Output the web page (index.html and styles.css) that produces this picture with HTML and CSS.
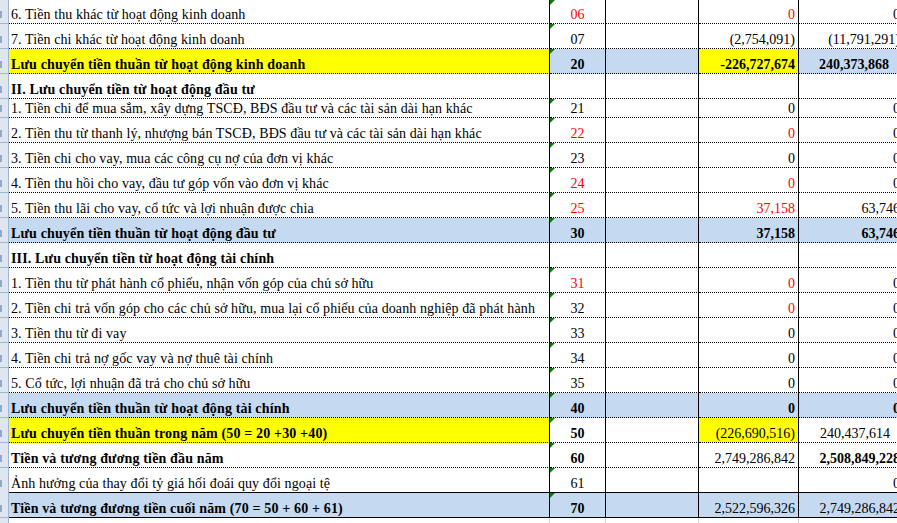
FILE: index.html
```html
<!DOCTYPE html>
<html lang="vi">
<head>
<meta charset="utf-8">
<title>Lưu chuyển tiền tệ</title>
<link rel="stylesheet" href="styles.css">
</head>
<body>
<div class="sheet">
  <div class="row first">
    <div class="hd"><span class="rn"></span></div>
    <div class="c lbl">6. Tiền thu khác từ hoạt động kinh doanh</div>
    <div class="c code tri red">06</div>
    <div class="c emp"></div>
    <div class="c num red">0</div>
    <div class="c num n5">0</div>
  </div>
  <div class="row">
    <div class="hd"><span class="rn"></span></div>
    <div class="c lbl">7. Tiền chi khác từ hoạt động kinh doanh</div>
    <div class="c code tri">07</div>
    <div class="c emp"></div>
    <div class="c num">(2,754,091)</div>
    <div class="c num n5 paren">(11,791,291)</div>
  </div>
  <div class="row b">
    <div class="hd"><span class="rn"></span></div>
    <div class="c lbl yel">Lưu chuyển tiền thuần từ hoạt động kinh doanh</div>
    <div class="c code tri blue">20</div>
    <div class="c emp blue"></div>
    <div class="c num yel">-226,727,674</div>
    <div class="c num n5 blue sp">240,373,868</div>
  </div>
  <div class="row b">
    <div class="hd"><span class="rn"></span></div>
    <div class="c lbl">II. Lưu chuyển tiền từ hoạt động đầu tư</div>
    <div class="c code"></div>
    <div class="c emp"></div>
    <div class="c num"></div>
    <div class="c num n5"></div>
  </div>
  <div class="row short">
    <div class="hd"><span class="rn"></span></div>
    <div class="c lbl">1. Tiền chi để mua sắm, xây dựng TSCĐ, BĐS đầu tư và các tài sản dài hạn khác</div>
    <div class="c code tri">21</div>
    <div class="c emp"></div>
    <div class="c num">0</div>
    <div class="c num n5">0</div>
  </div>
  <div class="row">
    <div class="hd"><span class="rn"></span></div>
    <div class="c lbl">2. Tiền thu từ thanh lý, nhượng bán TSCĐ, BĐS đầu tư và các tài sản dài hạn khác</div>
    <div class="c code tri red">22</div>
    <div class="c emp"></div>
    <div class="c num red">0</div>
    <div class="c num n5">0</div>
  </div>
  <div class="row">
    <div class="hd"><span class="rn"></span></div>
    <div class="c lbl">3. Tiền chi cho vay, mua các công cụ nợ của đơn vị khác</div>
    <div class="c code tri">23</div>
    <div class="c emp"></div>
    <div class="c num">0</div>
    <div class="c num n5">0</div>
  </div>
  <div class="row">
    <div class="hd"><span class="rn"></span></div>
    <div class="c lbl">4. Tiền thu hồi cho vay, đầu tư góp vốn vào đơn vị khác</div>
    <div class="c code tri red">24</div>
    <div class="c emp"></div>
    <div class="c num red">0</div>
    <div class="c num n5">0</div>
  </div>
  <div class="row">
    <div class="hd"><span class="rn"></span></div>
    <div class="c lbl">5. Tiền thu lãi cho vay, cổ tức và lợi nhuận được chia</div>
    <div class="c code tri red">25</div>
    <div class="c emp"></div>
    <div class="c num red">37,158</div>
    <div class="c num n5">63,746</div>
  </div>
  <div class="row b bluerow">
    <div class="hd"><span class="rn"></span></div>
    <div class="c lbl">Lưu chuyển tiền thuần từ hoạt động đầu tư</div>
    <div class="c code tri">30</div>
    <div class="c emp"></div>
    <div class="c num">37,158</div>
    <div class="c num n5">63,746</div>
  </div>
  <div class="row b">
    <div class="hd"><span class="rn"></span></div>
    <div class="c lbl">III. Lưu chuyển tiền từ hoạt động tài chính</div>
    <div class="c code"></div>
    <div class="c emp"></div>
    <div class="c num"></div>
    <div class="c num n5"></div>
  </div>
  <div class="row">
    <div class="hd"><span class="rn"></span></div>
    <div class="c lbl">1. Tiền thu từ phát hành cổ phiếu, nhận vốn góp của chủ sở hữu</div>
    <div class="c code tri red">31</div>
    <div class="c emp"></div>
    <div class="c num red">0</div>
    <div class="c num n5">0</div>
  </div>
  <div class="row">
    <div class="hd"><span class="rn"></span></div>
    <div class="c lbl">2. Tiền chi trả vốn góp cho các chủ sở hữu, mua lại cổ phiếu của doanh nghiệp đã phát hành</div>
    <div class="c code tri">32</div>
    <div class="c emp"></div>
    <div class="c num red">0</div>
    <div class="c num n5">0</div>
  </div>
  <div class="row">
    <div class="hd"><span class="rn"></span></div>
    <div class="c lbl">3. Tiền thu từ đi vay</div>
    <div class="c code tri">33</div>
    <div class="c emp"></div>
    <div class="c num">0</div>
    <div class="c num n5">0</div>
  </div>
  <div class="row">
    <div class="hd"><span class="rn"></span></div>
    <div class="c lbl">4. Tiền chi trả nợ gốc vay và nợ thuê tài chính</div>
    <div class="c code tri">34</div>
    <div class="c emp"></div>
    <div class="c num">0</div>
    <div class="c num n5">0</div>
  </div>
  <div class="row">
    <div class="hd"><span class="rn"></span></div>
    <div class="c lbl">5. Cổ tức, lợi nhuận đã trả cho chủ sở hữu</div>
    <div class="c code tri">35</div>
    <div class="c emp"></div>
    <div class="c num">0</div>
    <div class="c num n5">0</div>
  </div>
  <div class="row b bluerow">
    <div class="hd"><span class="rn"></span></div>
    <div class="c lbl">Lưu chuyển tiền thuần từ hoạt động tài chính</div>
    <div class="c code tri">40</div>
    <div class="c emp"></div>
    <div class="c num">0</div>
    <div class="c num n5">0</div>
  </div>
  <div class="row">
    <div class="hd"><span class="rn"></span></div>
    <div class="c lbl yel bold">Lưu chuyển tiền thuần trong năm (50 = 20 +30 +40)</div>
    <div class="c code tri bold">50</div>
    <div class="c emp"></div>
    <div class="c num yel">(226,690,516)</div>
    <div class="c num n5 sp2">240,437,614</div>
  </div>
  <div class="row">
    <div class="hd"><span class="rn"></span></div>
    <div class="c lbl bold">Tiền và tương đương tiền đầu năm</div>
    <div class="c code tri bold">60</div>
    <div class="c emp"></div>
    <div class="c num">2,749,286,842</div>
    <div class="c num n5 bold">2,508,849,228</div>
  </div>
  <div class="row">
    <div class="hd"><span class="rn"></span></div>
    <div class="c lbl">Ảnh hưởng của thay đổi tỷ giá hối đoái quy đổi ngoại tệ</div>
    <div class="c code tri">61</div>
    <div class="c emp"></div>
    <div class="c num"></div>
    <div class="c num n5">0</div>
  </div>
  <div class="row bluerow total">
    <div class="hd"><span class="rn"></span></div>
    <div class="c lbl bold">Tiền và tương đương tiền cuối năm (70 = 50 + 60 + 61)</div>
    <div class="c code tri bold">70</div>
    <div class="c emp"></div>
    <div class="c num">2,522,596,326</div>
    <div class="c num n5">2,749,286,842</div>
  </div>
  <div class="row tail">
    <div class="hd"></div>
    <div class="c lbl"></div>
    <div class="c code"></div>
    <div class="c emp"></div>
    <div class="c num"></div>
    <div class="c num n5"></div>
  </div>
</div>
</body>
</html>
```

FILE: styles.css
```css
html, body {
  margin: 0;
  padding: 0;
  background: #ffffff;
  overflow: hidden;
}
body {
  width: 897px;
  height: 523px;
  font-family: "Liberation Serif", "Times New Roman", serif;
  font-size: 14px;
  color: #000;
}
.sheet {
  display: flex;
  flex-direction: column;
  width: 902px;
}
.row {
  display: grid;
  grid-template-columns: 9px 541px 56px 93px 100px 103px;
  height: 25px;
}
.row.first { height: 24px; }
.row.short { height: 19px; }
.row.tail { height: 10px; }

.hd {
  position: relative;
  background: #dfe6ef;
  border-right: 1px solid #9eb6ce;
  border-bottom: 1px solid #9eb6ce;
  overflow: hidden;
}
.rn {
  position: absolute;
  left: 0;
  bottom: 5px;
  width: 2px;
  height: 7px;
  background: #6f8fbf;
  opacity: 0.7;
}
.c {
  position: relative;
  display: flex;
  align-items: flex-end;
  padding: 0 3px 0 2px;
  line-height: 16px;
  white-space: nowrap;
  overflow: hidden;
  border-bottom: 1px dotted #000;
  border-right: 1px solid #000;
}
.lbl { letter-spacing: 0.1px; }
.b .lbl, .lbl.bold { letter-spacing: 0.15px; }
.n5 { border-right: none; }
.code { justify-content: center; padding-left: 0; padding-right: 0; }
.num { justify-content: flex-end; padding-right: 3px; }
.num.n5 { padding-right: 2px; }
.num.n5.sp { padding-right: 13px; }
.num.n5.sp2 { padding-right: 12px; }
.num.n5.paren { padding-right: 2px; }

.b .c, .bold { font-weight: bold; }
.red { color: #ff0000; }
.yel { background: #ffff00; }
.blue, .bluerow .c { background: #c5d9f1; }
.bluerow .c.yel { background: #ffff00; }

.total .c {
  border-top: 1px solid #000;
  border-bottom: 1px solid #000;
}
.total { height: 26px; margin-top: -1px; }

.tail .c {
  border-bottom: none;
  border-right: 1px solid #d4d4d4;
}
.tail .n5 { border-right: none; }
.tail .hd { border-bottom: none; }

.tri::before {
  content: "";
  position: absolute;
  top: 0;
  left: 0;
  width: 0;
  height: 0;
  border-top: 5px solid #0a7a0a;
  border-right: 5px solid transparent;
}
```
